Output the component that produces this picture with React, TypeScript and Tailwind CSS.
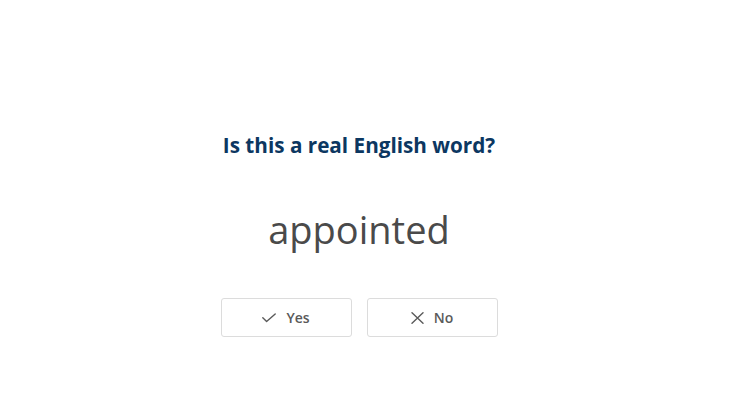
function CheckIcon() {
  return (
    <svg width="14" height="10" viewBox="0 0 14 10" fill="none" stroke="currentColor" strokeWidth="1.4" strokeLinecap="round" strokeLinejoin="round">
      <polyline points="0.8,4.8 4.6,8.6 13.2,1" />
    </svg>
  );
}

function CrossIcon() {
  return (
    <svg width="13" height="12" viewBox="0 0 13 12" fill="none" stroke="currentColor" strokeWidth="1.4" strokeLinecap="round">
      <path d="M1 0.8 12 11.2M12 0.8 1 11.2" />
    </svg>
  );
}

export default function App() {
  return (
    <div className="min-h-screen bg-white flex flex-col items-center pt-[130px] pr-[26px] font-['Open_Sans',sans-serif]">
      <h1 className="text-[20.7px] leading-[30px] font-bold text-[#0c3761]">Is this a real English word?</h1>
      <div className="mt-[43px] text-[38px] leading-[52px] text-[#4a4a4a]">appointed</div>
      <div className="mt-[43px] flex gap-[15px]">
        <button className="w-[131px] h-[39px] flex items-center justify-center gap-[10px] border border-[#dcdcdc] rounded-[3px] bg-white text-[#5a5a5a] text-[14px] font-semibold">
          <CheckIcon />
          <span>Yes</span>
        </button>
        <button className="w-[131px] h-[39px] flex items-center justify-center gap-[10px] border border-[#dcdcdc] rounded-[3px] bg-white text-[#5a5a5a] text-[14px] font-semibold">
          <CrossIcon />
          <span>No</span>
        </button>
      </div>
    </div>
  );
}
